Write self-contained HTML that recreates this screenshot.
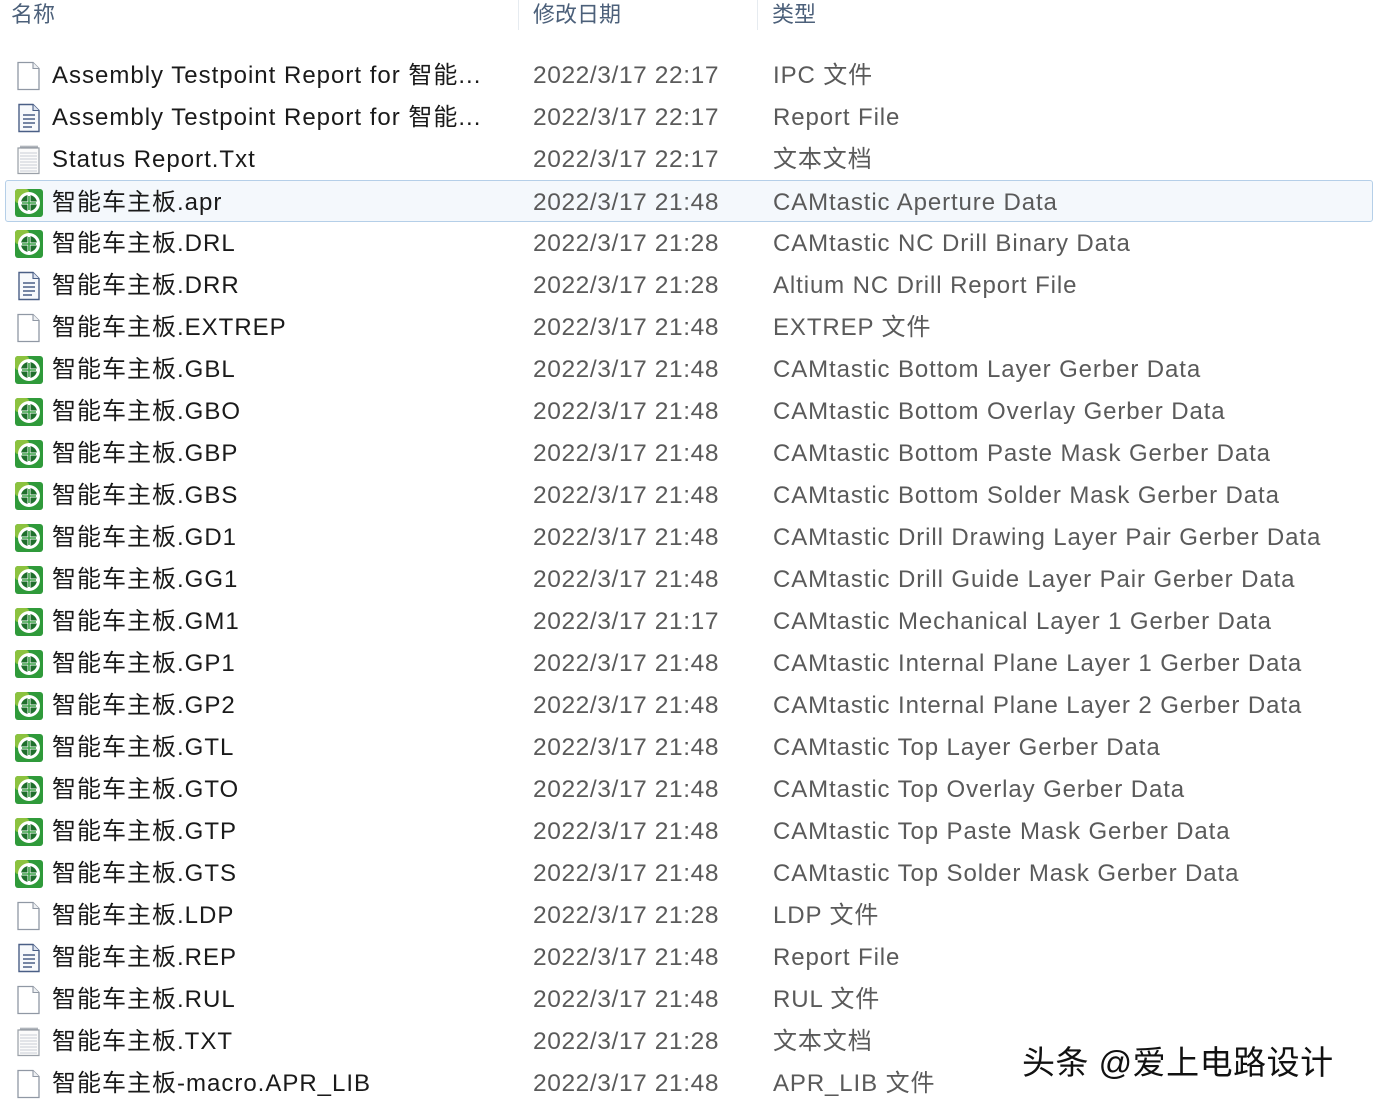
<!DOCTYPE html>
<html><head><meta charset="utf-8"><style>
body{margin:0;width:1376px;height:1106px;background:#fff;overflow:hidden;font-family:"Liberation Sans","Noto Sans CJK SC",sans-serif;position:relative}
.h{position:absolute;top:0;font-size:22px;color:#4c607a;line-height:30px}
.r{position:absolute;left:0;width:1376px;height:42px}
.r svg{position:absolute;left:14px;top:7px;width:30px;height:30px}
.n{position:absolute;left:52px;top:8px;font-size:24px;color:#1a1a1a;line-height:28px;white-space:nowrap;letter-spacing:1px}
.d{position:absolute;left:533px;top:8px;font-size:24.5px;color:#5a5a5a;line-height:28px;letter-spacing:.6px}
.t{position:absolute;left:773px;top:8px;font-size:24px;color:#5a5a5a;line-height:28px;white-space:nowrap;letter-spacing:.9px}
.sel{background:#f4f8fc;border:1px solid #b5cfe8;border-radius:3px;left:5px;width:1368px;box-sizing:border-box}
.sel>*{margin-left:-6px}
.wm{position:absolute;left:1022px;top:1036px;font-size:33px;letter-spacing:.5px;color:#111;text-shadow:1px 1px 0 #fff,-1px -1px 0 #fff;font-family:"Liberation Sans","Noto Sans CJK SC",sans-serif}
.hl{position:absolute;left:518px;top:0;width:1px;height:30px;background:#e6ebf0}
</style></head><body>
<svg width="0" height="0" style="position:absolute">
<defs>
<symbol id="B" viewBox="0 0 30 30"><path d="M4 1.5h15l6 6v21H4z" fill="#fff" stroke="#9098a4" stroke-width="1.3"/><path d="M19 1.5v6h6" fill="#eef0f3" stroke="#9098a4" stroke-width="1.1"/></symbol>
<symbol id="R" viewBox="0 0 30 30"><path d="M5 1.5h14l6 6v21H5z" fill="#f7f9fc" stroke="#4a5f86" stroke-width="1.4"/><path d="M19 1.5v6h6" fill="#dde4f0" stroke="#4a5f86" stroke-width="1.1"/><path d="M9 12h12M9 16h12M9 20h12M9 24h9" stroke="#4a5f86" stroke-width="1.4"/></symbol>
<symbol id="T" viewBox="0 0 30 30"><path d="M4 3h21v25.5H4z" fill="#fbfbfb" stroke="#9aa0a8" stroke-width="1.2"/><path d="M6 3l1-2 1 2 1-2 1 2 1-2 1 2 1-2 1 2 1-2 1 2 1-2 1 2 1-2 1 2 1-2 1 2 1-2 1 2" fill="none" stroke="#9aa0a8" stroke-width=".9"/><path d="M6 8h17M6 11h17M6 14h17M6 17h17M6 20h17M6 23h17M6 26h17" stroke="#c8cdd4" stroke-width="1"/></symbol>
<symbol id="C" viewBox="0 0 30 30"><rect x="1" y="1" width="28" height="28" rx="3" fill="#2f9a3a"/><rect x="1" y="1" width="14" height="14" rx="3" fill="#8cc23f"/><circle cx="15" cy="15" r="11" fill="#fff"/><circle cx="15" cy="15" r="8" fill="#1f6f2c"/><path d="M15 5v20M5 15h20" stroke="#fff" stroke-width="3"/><path d="M15 8v14M8 15h14" stroke="#3aa046" stroke-width="1.6"/></symbol>
</defs></svg>
<div class="h" style="left:11px">名称</div>
<div class="hl"></div>
<div class="h" style="left:533px">修改日期</div>
<div class="hl" style="left:757px"></div>
<div class="h" style="left:772px">类型</div>

<div class="r" style="top:54px"><svg><use href="#B"/></svg><div class="n">Assembly Testpoint Report for 智能...</div><div class="d">2022/3/17 22:17</div><div class="t">IPC 文件</div></div>
<div class="r" style="top:96px"><svg><use href="#R"/></svg><div class="n">Assembly Testpoint Report for 智能...</div><div class="d">2022/3/17 22:17</div><div class="t">Report File</div></div>
<div class="r" style="top:138px"><svg><use href="#T"/></svg><div class="n">Status Report.Txt</div><div class="d">2022/3/17 22:17</div><div class="t">文本文档</div></div>
<div class="r sel" style="top:180px"><svg><use href="#C"/></svg><div class="n">智能车主板.apr</div><div class="d">2022/3/17 21:48</div><div class="t">CAMtastic Aperture Data</div></div>
<div class="r" style="top:222px"><svg><use href="#C"/></svg><div class="n">智能车主板.DRL</div><div class="d">2022/3/17 21:28</div><div class="t">CAMtastic NC Drill Binary Data</div></div>
<div class="r" style="top:264px"><svg><use href="#R"/></svg><div class="n">智能车主板.DRR</div><div class="d">2022/3/17 21:28</div><div class="t">Altium NC Drill Report File</div></div>
<div class="r" style="top:306px"><svg><use href="#B"/></svg><div class="n">智能车主板.EXTREP</div><div class="d">2022/3/17 21:48</div><div class="t">EXTREP 文件</div></div>
<div class="r" style="top:348px"><svg><use href="#C"/></svg><div class="n">智能车主板.GBL</div><div class="d">2022/3/17 21:48</div><div class="t">CAMtastic Bottom Layer Gerber Data</div></div>
<div class="r" style="top:390px"><svg><use href="#C"/></svg><div class="n">智能车主板.GBO</div><div class="d">2022/3/17 21:48</div><div class="t">CAMtastic Bottom Overlay Gerber Data</div></div>
<div class="r" style="top:432px"><svg><use href="#C"/></svg><div class="n">智能车主板.GBP</div><div class="d">2022/3/17 21:48</div><div class="t">CAMtastic Bottom Paste Mask Gerber Data</div></div>
<div class="r" style="top:474px"><svg><use href="#C"/></svg><div class="n">智能车主板.GBS</div><div class="d">2022/3/17 21:48</div><div class="t">CAMtastic Bottom Solder Mask Gerber Data</div></div>
<div class="r" style="top:516px"><svg><use href="#C"/></svg><div class="n">智能车主板.GD1</div><div class="d">2022/3/17 21:48</div><div class="t">CAMtastic Drill Drawing Layer Pair Gerber Data</div></div>
<div class="r" style="top:558px"><svg><use href="#C"/></svg><div class="n">智能车主板.GG1</div><div class="d">2022/3/17 21:48</div><div class="t">CAMtastic Drill Guide Layer Pair Gerber Data</div></div>
<div class="r" style="top:600px"><svg><use href="#C"/></svg><div class="n">智能车主板.GM1</div><div class="d">2022/3/17 21:17</div><div class="t">CAMtastic Mechanical Layer 1 Gerber Data</div></div>
<div class="r" style="top:642px"><svg><use href="#C"/></svg><div class="n">智能车主板.GP1</div><div class="d">2022/3/17 21:48</div><div class="t">CAMtastic Internal Plane Layer 1 Gerber Data</div></div>
<div class="r" style="top:684px"><svg><use href="#C"/></svg><div class="n">智能车主板.GP2</div><div class="d">2022/3/17 21:48</div><div class="t">CAMtastic Internal Plane Layer 2 Gerber Data</div></div>
<div class="r" style="top:726px"><svg><use href="#C"/></svg><div class="n">智能车主板.GTL</div><div class="d">2022/3/17 21:48</div><div class="t">CAMtastic Top Layer Gerber Data</div></div>
<div class="r" style="top:768px"><svg><use href="#C"/></svg><div class="n">智能车主板.GTO</div><div class="d">2022/3/17 21:48</div><div class="t">CAMtastic Top Overlay Gerber Data</div></div>
<div class="r" style="top:810px"><svg><use href="#C"/></svg><div class="n">智能车主板.GTP</div><div class="d">2022/3/17 21:48</div><div class="t">CAMtastic Top Paste Mask Gerber Data</div></div>
<div class="r" style="top:852px"><svg><use href="#C"/></svg><div class="n">智能车主板.GTS</div><div class="d">2022/3/17 21:48</div><div class="t">CAMtastic Top Solder Mask Gerber Data</div></div>
<div class="r" style="top:894px"><svg><use href="#B"/></svg><div class="n">智能车主板.LDP</div><div class="d">2022/3/17 21:28</div><div class="t">LDP 文件</div></div>
<div class="r" style="top:936px"><svg><use href="#R"/></svg><div class="n">智能车主板.REP</div><div class="d">2022/3/17 21:48</div><div class="t">Report File</div></div>
<div class="r" style="top:978px"><svg><use href="#B"/></svg><div class="n">智能车主板.RUL</div><div class="d">2022/3/17 21:48</div><div class="t">RUL 文件</div></div>
<div class="r" style="top:1020px"><svg><use href="#T"/></svg><div class="n">智能车主板.TXT</div><div class="d">2022/3/17 21:28</div><div class="t">文本文档</div></div>
<div class="r" style="top:1062px"><svg><use href="#B"/></svg><div class="n">智能车主板-macro.APR_LIB</div><div class="d">2022/3/17 21:48</div><div class="t">APR_LIB 文件</div></div>
<div class="wm">头条 @爱上电路设计</div>
</body></html>
